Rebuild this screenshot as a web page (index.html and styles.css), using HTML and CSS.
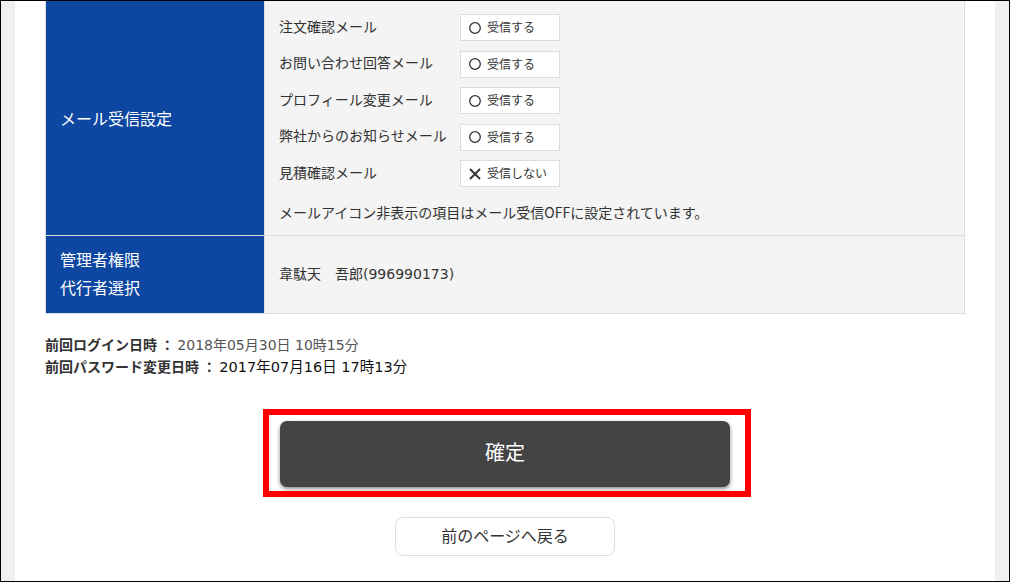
FILE: index.html
```html
<!DOCTYPE html>
<html lang="ja">
<head>
<meta charset="utf-8">
<title>メール受信設定</title>
<link rel="stylesheet" href="styles.css">
</head>
<body>
<div class="frame">
  <div class="page">
    <div class="table">
      <div class="row prev"><div class="th"></div><div class="td"></div></div>
      <div class="row">
        <div class="th">メール受信設定</div>
        <div class="td mail">
          <div class="mail-list">
            <div class="mail-row"><span class="mail-label">注文確認メール</span><span class="toggle"><svg class="ico" viewBox="0 0 12 12"><circle cx="6" cy="6" r="5.3" fill="none" stroke="#333" stroke-width="1.3"/></svg><span class="t">受信する</span></span></div>
            <div class="mail-row"><span class="mail-label">お問い合わせ回答メール</span><span class="toggle"><svg class="ico" viewBox="0 0 12 12"><circle cx="6" cy="6" r="5.3" fill="none" stroke="#333" stroke-width="1.3"/></svg><span class="t">受信する</span></span></div>
            <div class="mail-row"><span class="mail-label">プロフィール変更メール</span><span class="toggle"><svg class="ico" viewBox="0 0 12 12"><circle cx="6" cy="6" r="5.3" fill="none" stroke="#333" stroke-width="1.3"/></svg><span class="t">受信する</span></span></div>
            <div class="mail-row"><span class="mail-label">弊社からのお知らせメール</span><span class="toggle"><svg class="ico" viewBox="0 0 12 12"><circle cx="6" cy="6" r="5.3" fill="none" stroke="#333" stroke-width="1.3"/></svg><span class="t">受信する</span></span></div>
            <div class="mail-row"><span class="mail-label">見積確認メール</span><span class="toggle"><svg class="ico" viewBox="0 0 12 12"><path d="M1 1 L11 11 M11 1 L1 11" stroke="#333" stroke-width="1.9" fill="none"/></svg><span class="t">受信しない</span></span></div>
          </div>
          <p class="note">メールアイコン非表示の項目はメール受信OFFに設定されています。</p>
        </div>
      </div>
      <div class="row">
        <div class="th two">管理者権限<br>代行者選択</div>
        <div class="td center"><span>韋駄天　吾郎<span class="num">(996990173)</span></span></div>
      </div>
    </div>

    <div class="login">
      <div class="line"><b>前回ログイン日時 ：</b> <span class="num v1">2018年05月30日 10時15分</span></div>
      <div class="line"><b>前回パスワード変更日時 ：</b> <span class="num v2">2017年07月16日 17時13分</span></div>
    </div>

    <div class="actions">
      <div class="confirm-wrap">
        <button class="confirm">確定</button>
        <span class="highlight"></span>
      </div>
      <button class="back">前のページへ戻る</button>
    </div>
  </div>
</div>
</body>
</html>
```

FILE: styles.css
```css
* { box-sizing: border-box; }
html, body { margin: 0; padding: 0; }
body {
  font-family: "Noto Sans CJK JP", "Noto Sans", sans-serif;
  color: #333;
}
.num { font-family: "DejaVu Sans", "Noto Sans CJK JP", sans-serif; }
.frame {
  width: 1010px;
  height: 582px;
  border: 1px solid #000;
  background: #f0f0f0;
  padding: 0 14px;
  overflow: hidden;
}
.page {
  background: #fff;
  height: 100%;
  padding: 0 30px;
}
.table {
  border-left: 1px solid #ddd;
}
.row {
  display: grid;
  grid-template-columns: 219px 1fr;
  border-bottom: 1px solid #ddd;
}
.row.prev { height: 3px; }
.th {
  background: #0d47a1;
  color: #fff;
  font-size: 16px;
  line-height: 28px;
  border-right: 1px solid #ddd;
  padding: 0 14px 4px;
  display: flex;
  align-items: center;
}
.th.two { padding: 9px 14px 12px; }
.td {
  background: #f4f4f4;
  border-right: 1px solid #ddd;
  padding: 0 14px;
  font-size: 14px;
}
.td.center {
  display: flex;
  align-items: center;
  padding-bottom: 4px;
}
.td.mail { padding: 10px 14px 13px; }
.mail-list {
  display: flex;
  flex-direction: column;
  gap: 9.5px;
}
.mail-row {
  display: flex;
  align-items: center;
  height: 27px;
}
.mail-label {
  width: 181px;
  font-size: 14px;
  padding-bottom: 4px;
}
.toggle {
  width: 100px;
  height: 27px;
  background: #fff;
  border: 1px solid #ddd;
  display: flex;
  align-items: center;
  gap: 6px;
  padding-left: 8px;
  font-size: 12px;
  color: #333;
}
.toggle .t { padding-bottom: 2px; }
.ico { width: 12px; height: 12px; flex: none; }
.note {
  margin: 15px 0 0;
  height: 20px;
  line-height: 20px;
  font-size: 14px;
}
.login {
  margin-top: 19px;
  font-size: 14px;
}
.login .line {
  height: 22px;
  line-height: 22px;
  white-space: nowrap;
}
.login b { font-weight: bold; color: #333; }
.v1 { font-size: 14px; color: #555; }
.v2 { font-size: 14.5px; color: #111; }
.actions {
  margin-top: 44px;
  display: flex;
  flex-direction: column;
  align-items: center;
}
.confirm-wrap {
  position: relative;
  width: 450px;
  height: 66px;
}
.confirm {
  width: 100%;
  height: 100%;
  border: none;
  border-radius: 7px;
  background: #444;
  color: #fff;
  font-family: "Noto Sans CJK JP", sans-serif;
  font-size: 20px;
  padding: 0 0 6px;
  box-shadow: 0 2px 4px rgba(0,0,0,0.45);
}
.highlight {
  position: absolute;
  top: -12px;
  left: -17px;
  right: -21px;
  bottom: -10px;
  border: 6px solid #f00;
  pointer-events: none;
}
.back {
  margin-top: 30px;
  width: 220px;
  height: 39px;
  background: #fff;
  border: 1px solid #ddd;
  border-radius: 8px;
  font-family: "Noto Sans CJK JP", sans-serif;
  font-size: 16px;
  padding: 0 0 4px;
  color: #333;
}
```
